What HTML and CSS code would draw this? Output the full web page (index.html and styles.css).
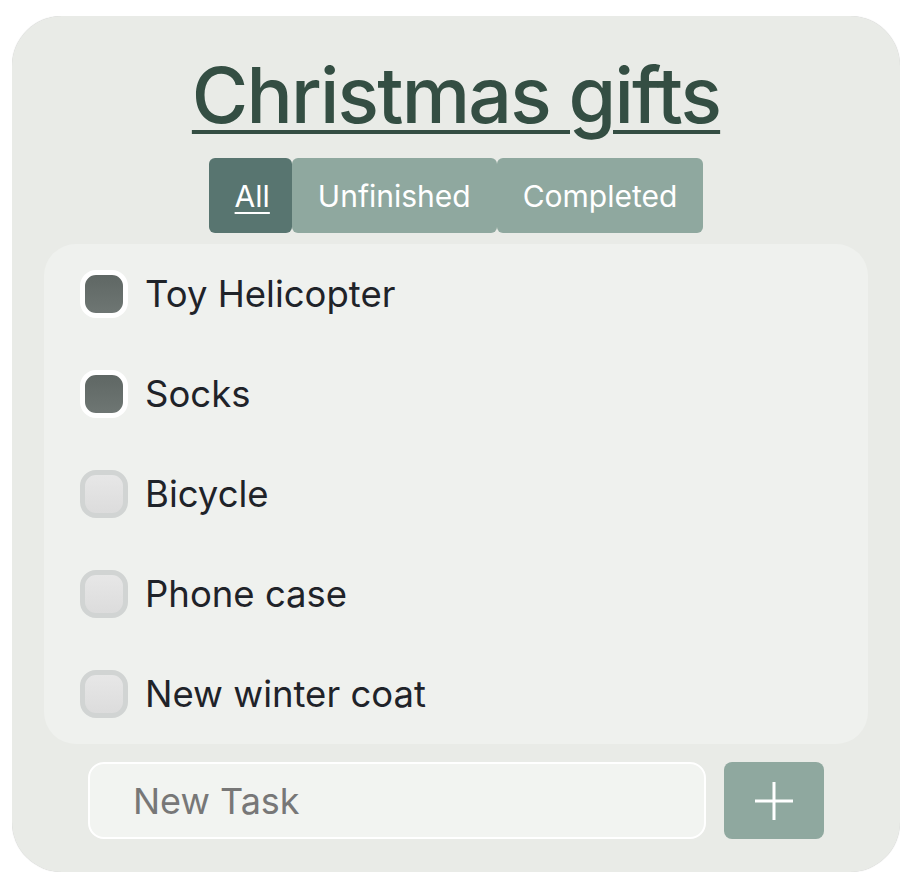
FILE: index.html
```html
<!DOCTYPE html>
<html lang="en">
<head>
<meta charset="utf-8">
<title>Christmas gifts</title>
<link rel="stylesheet" href="styles.css">
</head>
<body>
<main class="card">
  <h1 class="title">Christmas gifts</h1>
  <div class="tabs">
    <button class="tab tab-active">All</button>
    <button class="tab">Unfinished</button>
    <button class="tab">Completed</button>
  </div>
  <ul class="list">
    <li class="item"><span class="check checked"></span><span class="label">Toy Helicopter</span></li>
    <li class="item"><span class="check checked"></span><span class="label">Socks</span></li>
    <li class="item"><span class="check"></span><span class="label">Bicycle</span></li>
    <li class="item"><span class="check"></span><span class="label">Phone case</span></li>
    <li class="item"><span class="check"></span><span class="label">New winter coat</span></li>
  </ul>
  <form class="new-form">
    <input class="new-input" type="text" placeholder="New Task">
    <button class="add-btn" type="button" aria-label="Add">
      <svg width="40" height="40" viewBox="0 0 40 40"><path d="M20 1V39M1 20H39" stroke="#fff" stroke-width="3" fill="none"/></svg>
    </button>
  </form>
</main>
</body>
</html>
```
FILE: styles.css
```css
* { box-sizing: border-box; }
html, body { background: #ffffff; }
body {
  margin: 16px 16px 20px 12px;
  font-family: Inter, "Noto Sans", "Liberation Sans", sans-serif;
}
.card {
  width: 888px;
  height: 856px;
  background: #e9ebe7;
  border-radius: 50px;
  padding: 32px 32px 0;
  display: flex;
  flex-direction: column;
  align-items: center;
  box-shadow: 0 0 1px rgba(0,0,0,0.25);
}
.title {
  margin: 0;
  height: 94px;
  font-size: 77px;
  line-height: 94px;
  font-weight: 500;
  color: #344e43;
  text-decoration: underline;
  text-decoration-thickness: 4px;
  text-underline-offset: 7px;
  letter-spacing: -1.8px;
}
.tabs {
  display: flex;
  margin-top: 16px;
  height: 75px;
}
.tab {
  border: none;
  background: #8fa89f;
  color: #ffffff;
  font-family: inherit;
  font-size: 30px;
  padding: 0 26px;
  border-radius: 6px;
}
.tab-active {
  background: #587570;
  text-decoration: underline;
  text-underline-offset: 5px;
  text-decoration-thickness: 2px;
  padding: 0 22px 0 26px;
}
.list {
  list-style: none;
  margin: 11px 0 0;
  padding: 0 36px;
  width: 824px;
  background: #eff1ee;
  border-radius: 32px;
}
.item {
  height: 100px;
  display: flex;
  align-items: center;
  gap: 17px;
}
.check {
  width: 48px;
  height: 48px;
  border-radius: 16px;
  border: 5px solid #d1d4d3;
  background: linear-gradient(#e7e7e7, #dcdcdc);
  flex: none;
}
.check.checked {
  border-color: #ffffff;
  background: linear-gradient(#5f6764, #6e7673);
}
.label {
  font-size: 36.5px;
  color: #1f2329;
}
.new-form {
  display: flex;
  gap: 18px;
  margin-top: 18px;
  width: 736px;
  height: 77px;
}
.new-input {
  flex: 1;
  height: 77px;
  border: 2px solid #ffffff;
  border-radius: 16px;
  background: #f2f4f1;
  padding: 0 0 0 43px;
  font-family: inherit;
  font-size: 36px;
  color: #1f2329;
  outline: none;
}
.new-input::placeholder { color: #777777; }
.add-btn {
  width: 100px;
  height: 77px;
  border: none;
  border-radius: 8px;
  background: #8fa89f;
  display: flex;
  align-items: center;
  justify-content: center;
  padding: 0;
}
```
